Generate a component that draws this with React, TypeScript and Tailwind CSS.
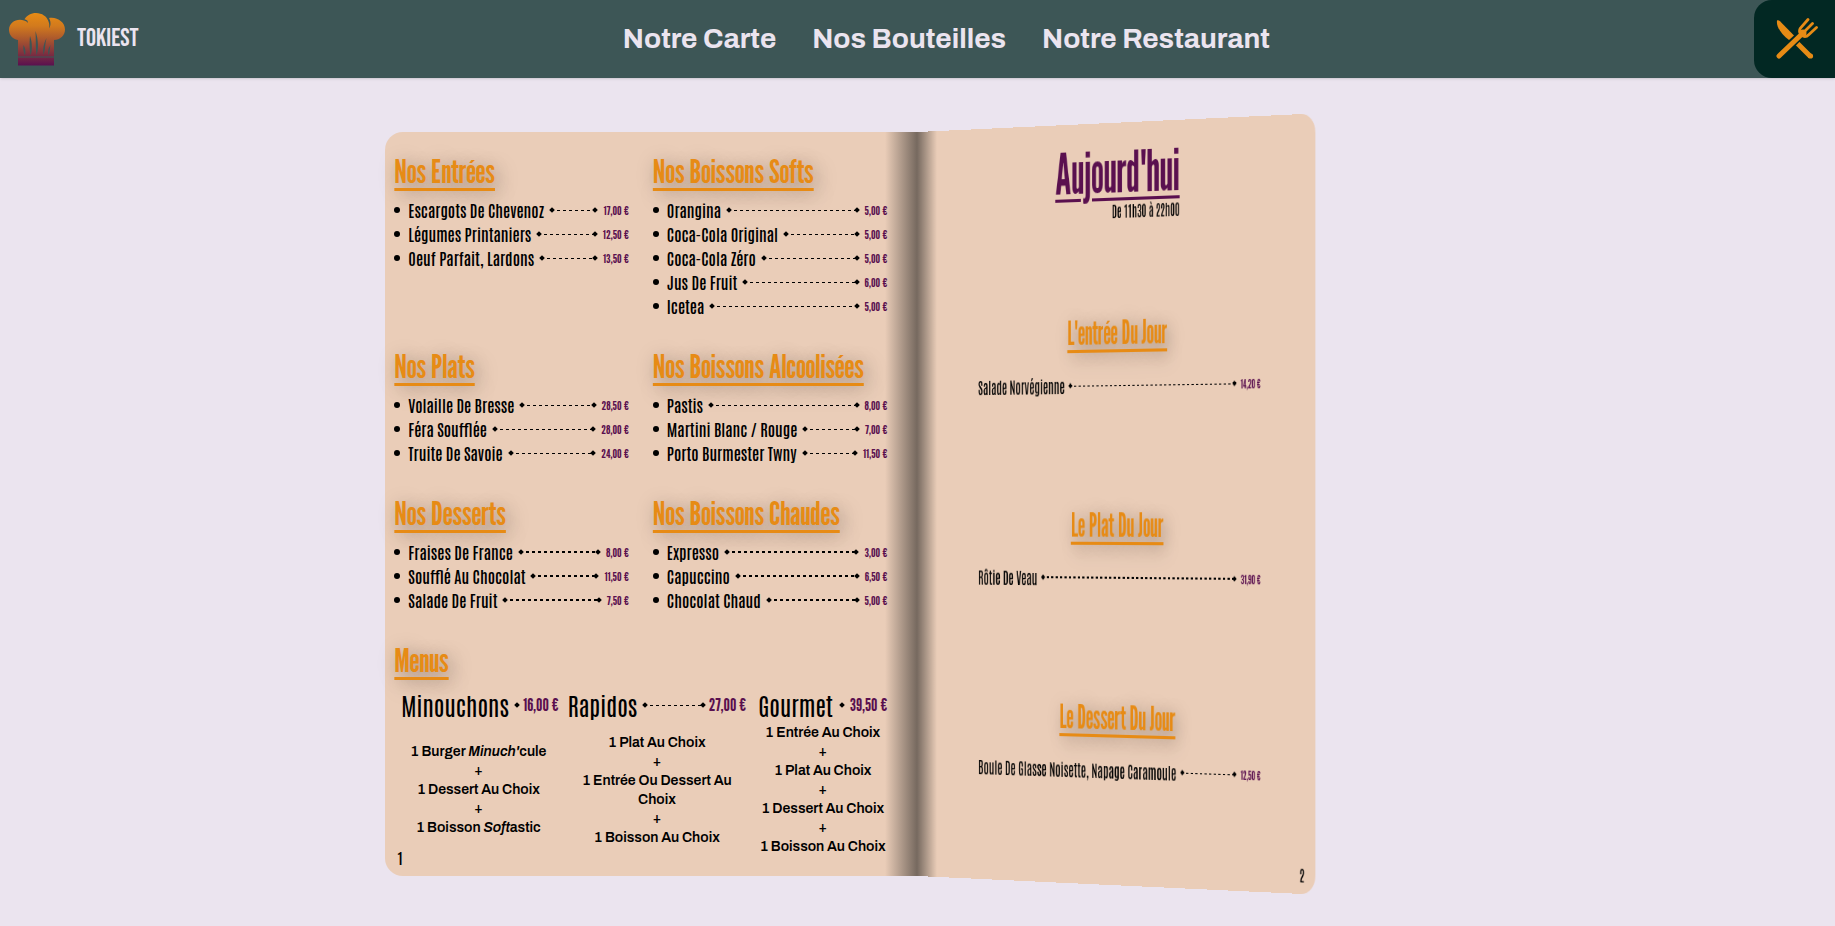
import type { ReactNode } from "react";

type Dish = { name: string; price: string };
type Section = { title: string; dishes: Dish[]; thick?: boolean };

const left: Section[] = [
  {
    title: "Nos Entrées",
    dishes: [
      { name: "Escargots De Chevenoz", price: "17,00 €" },
      { name: "Légumes Printaniers", price: "12,50 €" },
      { name: "Oeuf Parfait, Lardons", price: "13,50 €" },
    ],
  },
  {
    title: "Nos Boissons Softs",
    dishes: [
      { name: "Orangina", price: "5,00 €" },
      { name: "Coca-Cola Original", price: "5,00 €" },
      { name: "Coca-Cola Zéro", price: "5,00 €" },
      { name: "Jus De Fruit", price: "6,00 €" },
      { name: "Icetea", price: "5,00 €" },
    ],
  },
  {
    title: "Nos Plats",
    dishes: [
      { name: "Volaille De Bresse", price: "28,50 €" },
      { name: "Féra Soufflée", price: "28,00 €" },
      { name: "Truite De Savoie", price: "24,00 €" },
    ],
  },
  {
    title: "Nos Boissons Alcoolisées",
    dishes: [
      { name: "Pastis", price: "8,00 €" },
      { name: "Martini Blanc / Rouge", price: "7,00 €" },
      { name: "Porto Burmester Twny", price: "11,50 €" },
    ],
  },
  {
    title: "Nos Desserts",
    thick: true,
    dishes: [
      { name: "Fraises De France", price: "8,00 €" },
      { name: "Soufflé Au Chocolat", price: "11,50 €" },
      { name: "Salade De Fruit", price: "7,50 €" },
    ],
  },
  {
    title: "Nos Boissons Chaudes",
    thick: true,
    dishes: [
      { name: "Expresso", price: "3,00 €" },
      { name: "Capuccino", price: "6,50 €" },
      { name: "Chocolat Chaud", price: "5,00 €" },
    ],
  },
];

const menus: { name: string; price: string; lines: ReactNode[] }[] = [
  {
    name: "Minouchons",
    price: "16,00 €",
    lines: [<>1 Burger <em>Minuch'</em>cule</>, "1 Dessert Au Choix", <>1 Boisson <em>Soft</em>astic</>],
  },
  {
    name: "Rapidos",
    price: "27,00 €",
    lines: ["1 Plat Au Choix", "1 Entrée Ou Dessert Au Choix", "1 Boisson Au Choix"],
  },
  {
    name: "Gourmet",
    price: "39,50 €",
    lines: ["1 Entrée Au Choix", "1 Plat Au Choix", "1 Dessert Au Choix", "1 Boisson Au Choix"],
  },
];

const today: Section[] = [
  { title: "L'entrée Du Jour", dishes: [{ name: "Salade Norvégienne", price: "14,20 €" }] },
  { title: "Le Plat Du Jour", thick: true, dishes: [{ name: "Rôtie De Veau", price: "31,90 €" }] },
  {
    title: "Le Dessert Du Jour",
    dishes: [{ name: "Boule De Glasse Noisette, Napage Caramoule", price: "12,50 €" }],
  },
];

function Diamond() {
  return <span className="size-1 shrink-0 rotate-45 bg-black" />;
}

function Leader({ thick }: { thick?: boolean }) {
  return (
    <span aria-hidden="true" className="flex min-w-1 flex-1 items-center">
      <Diamond />
      <span
        className={
          thick
            ? "h-0.5 flex-1 bg-[repeating-linear-gradient(90deg,transparent_0_3px,#000_3px_6px)]"
            : "h-px flex-1 bg-[repeating-linear-gradient(90deg,transparent_0_3px,#000_3px_6px)]"
        }
      />
      <Diamond />
    </span>
  );
}

function Title({ children }: { children: ReactNode }) {
  return (
    <h2 className="h-12 whitespace-nowrap font-['League_Gothic','Open_Sans_Condensed','Open_Sans',sans-serif] text-[32px] leading-[48px] text-[#e78b15] underline decoration-[3px] underline-offset-[5px] [text-shadow:4px_4px_20px_rgba(0,0,0,0.35)]">
      {children}
    </h2>
  );
}

function Row({ dish, thick, bullet }: { dish: Dish; thick?: boolean; bullet?: boolean }) {
  return (
    <li className="flex h-6 items-center whitespace-nowrap">
      {bullet && <span aria-hidden="true" className="mr-2 size-1.5 shrink-0 rounded-full bg-black" />}
      <span className="mr-1.5 text-[16px] leading-[22px]">{dish.name}</span>
      <Leader thick={thick} />
      <span className="ml-1.5 font-['League_Gothic','Open_Sans_Condensed','Open_Sans',sans-serif] text-[13px] leading-6 text-[#5a104f]">
        {dish.price}
      </span>
    </li>
  );
}

function Hat() {
  return (
    <svg viewBox="0 0 56 53" className="h-[53px] w-14" aria-hidden="true">
      <defs>
        <linearGradient id="hat" x1="0" y1="0" x2="0" y2="1">
          <stop offset="0" stopColor="#e78b15" />
          <stop offset="0.25" stopColor="#d27a1d" />
          <stop offset="1" stopColor="#5a104f" />
        </linearGradient>
      </defs>
      <path
        fill="url(#hat)"
        d="M9 52.500V44.500H45V52.500ZM9 43.500V27C3.500 26 0 22 0 17C0 9.500 8 5 15 7.500C17 8 18.200 9 19 10L18.500 7.800C17.500 7 16.500 6.600 15.500 6.300C17.500 2.500 22 0 27 0C33 0 38 3.500 39.500 8.500C40.500 11 40.500 13 40 15.500C42.200 12.500 41.800 8 40 5C48 3.500 56 9 56 16.500C56 22.500 51 27 45 27V43.500Z"
      />
      <g fill="#3d5656">
        <path d="M14.500 32C14 36 14.500 39 16 42.500C16.800 39 16.500 35 14.500 32Z" />
        <path d="M21 23C20.300 31 20.500 36 21.500 42.500C23.300 38 23.500 30 21 23Z" />
        <path d="M26.500 18C27 27 26.500 35 27.500 42.500C29.800 37 29.500 27 26.500 18Z" />
        <path d="M37.500 25C34.500 31 33.500 36 34.500 42C36.500 37 35.800 31 37.500 25Z" />
        <path d="M41.500 32C39 35.500 38.500 39 39.800 42.500C41 39 40.500 36 41.500 32Z" />
      </g>
    </svg>
  );
}

function Cutlery() {
  return (
    <svg viewBox="0 0 42 42" className="size-[42px]" aria-hidden="true" fill="#e78b15">
      <path d="M1 2.500C2 1.800 3 2.300 4 3.300L18 17.500L13 22C6 17 0 9 1 2.500Z" />
      <path d="M20 24L34.500 38.500" stroke="#e78b15" strokeWidth="5" />
      <circle cx="34.500" cy="38" r="2.600" />
      <path d="M6 36L25 17" stroke="#022823" strokeWidth="7.500" />
      <path d="M3 38L27 15" stroke="#e78b15" strokeWidth="5" strokeLinecap="round" />
      <path
        d="M32 1.500L24.500 10C22.500 13 24 16 26 17.500C28.500 19.500 31 18.500 33 16.500L40.500 9.500M36.500 5.500L28 14"
        fill="none"
        stroke="#e78b15"
        strokeWidth="2.800"
        strokeLinecap="round"
      />
      <circle cx="27" cy="15" r="3.500" />
    </svg>
  );
}

export default function App() {
  return (
    <div className="min-h-screen bg-[#ebe4ef] font-['Antonio','Open_Sans_Condensed','Open_Sans',sans-serif] font-semibold text-black">
      <header className="flex h-[78px] items-stretch justify-between bg-[#3d5656] shadow-sm">
        <a href="#" className="flex items-center gap-3 pl-[9px] text-[#ebe4ef]">
          <Hat />
          <span className="font-['Bebas_Neue','Open_Sans_Condensed',sans-serif] text-[25px] font-normal">TOKIEST</span>
        </a>
        <nav className="flex items-center gap-9 font-['Archivo','Liberation_Sans',sans-serif] text-[28px] font-bold text-[#ebe4ef]">
          <a href="#carte">Notre Carte</a>
          <a href="#bouteilles">Nos Bouteilles</a>
          <a href="#restaurant">Notre Restaurant</a>
        </nav>
        <button
          type="button"
          aria-label="Menu"
          className="flex w-[81px] items-center justify-center rounded-l-[18px] bg-[#022823] pl-1"
        >
          <Cutlery />
        </button>
      </header>

      <main className="flex pt-[54px] pl-[21%]">
        <article className="relative w-[36.700%] rounded-l-[18px] bg-[#eacdb8] bg-[linear-gradient(90deg,transparent,#76695f)] bg-[length:32px_100%] bg-right bg-no-repeat pt-[15px] pr-[30px] pb-5 pl-[9px]">
          <div className="grid grid-cols-2 gap-6">
            {left.map((s) => (
              <section key={s.title}>
                <Title>{s.title}</Title>
                <ul className="mt-[3px]">
                  {s.dishes.map((d) => (
                    <Row key={d.name} dish={d} thick={s.thick} bullet />
                  ))}
                </ul>
              </section>
            ))}
          </div>
          <section className="mt-6">
            <Title>Menus</Title>
            <div className="mt-[3px] grid grid-cols-[153fr_177fr_128fr] gap-x-3 pl-[7px]">
              {menus.map((m) => (
                <div key={m.name} className="flex min-w-0 flex-col">
                  <h3 className="flex h-9 items-center whitespace-nowrap">
                    <span className="mr-1.5 text-[24px] leading-9 font-normal">{m.name}</span>
                    {m.name === "Rapidos" ? (
                      <Leader />
                    ) : (
                      <span className="flex flex-1 justify-center">
                        <Diamond />
                      </span>
                    )}
                    <span className="ml-1 font-['League_Gothic','Open_Sans_Condensed','Open_Sans',sans-serif] text-[18px] leading-9 text-[#5a104f]">
                      {m.price}
                    </span>
                  </h3>
                  <div className="flex flex-1 flex-col justify-center text-center font-['Archivo','Liberation_Sans',sans-serif] text-[14px] leading-[19px] font-semibold">
                    {m.lines.map((l, i) => (
                      <div key={i}>
                        {i > 0 && <p>+</p>}
                        <p>{l}</p>
                      </div>
                    ))}
                  </div>
                </div>
              ))}
            </div>
          </section>
          <span className="absolute bottom-2 left-3 text-[15px] leading-5">1</span>
        </article>

        <article className="relative flex w-[36.700%] origin-left flex-col rounded-r-[18px] bg-[#eacdb8] bg-[linear-gradient(90deg,#76695f,transparent)] bg-[length:28px_100%] bg-left bg-no-repeat pr-[70px] pl-[85px] [transform:perspective(7838px)_rotateY(-44.5deg)]">
          <header className="flex h-[180px] justify-center pt-5">
            <div className="flex flex-col text-right">
              <h1 className="font-['League_Gothic','Open_Sans_Condensed','Open_Sans',sans-serif] text-[56px] leading-[56px] text-[#5a104f] underline decoration-[3px] underline-offset-[5px]">
                Aujourd'hui
              </h1>
              <p className="text-[14px] leading-5">De 11h30 à 22h00</p>
            </div>
          </header>
          {today.map((s) => (
            <section key={s.title} className="flex-1 basis-0">
              <div className="flex justify-center">
                <Title>{s.title}</Title>
              </div>
              <ul className="mt-4">
                {s.dishes.map((d) => (
                  <Row key={d.name} dish={d} thick={s.thick} />
                ))}
              </ul>
            </section>
          ))}
          <span className="absolute right-3.5 bottom-2 text-[15px] leading-5">2</span>
        </article>
      </main>
    </div>
  );
}
